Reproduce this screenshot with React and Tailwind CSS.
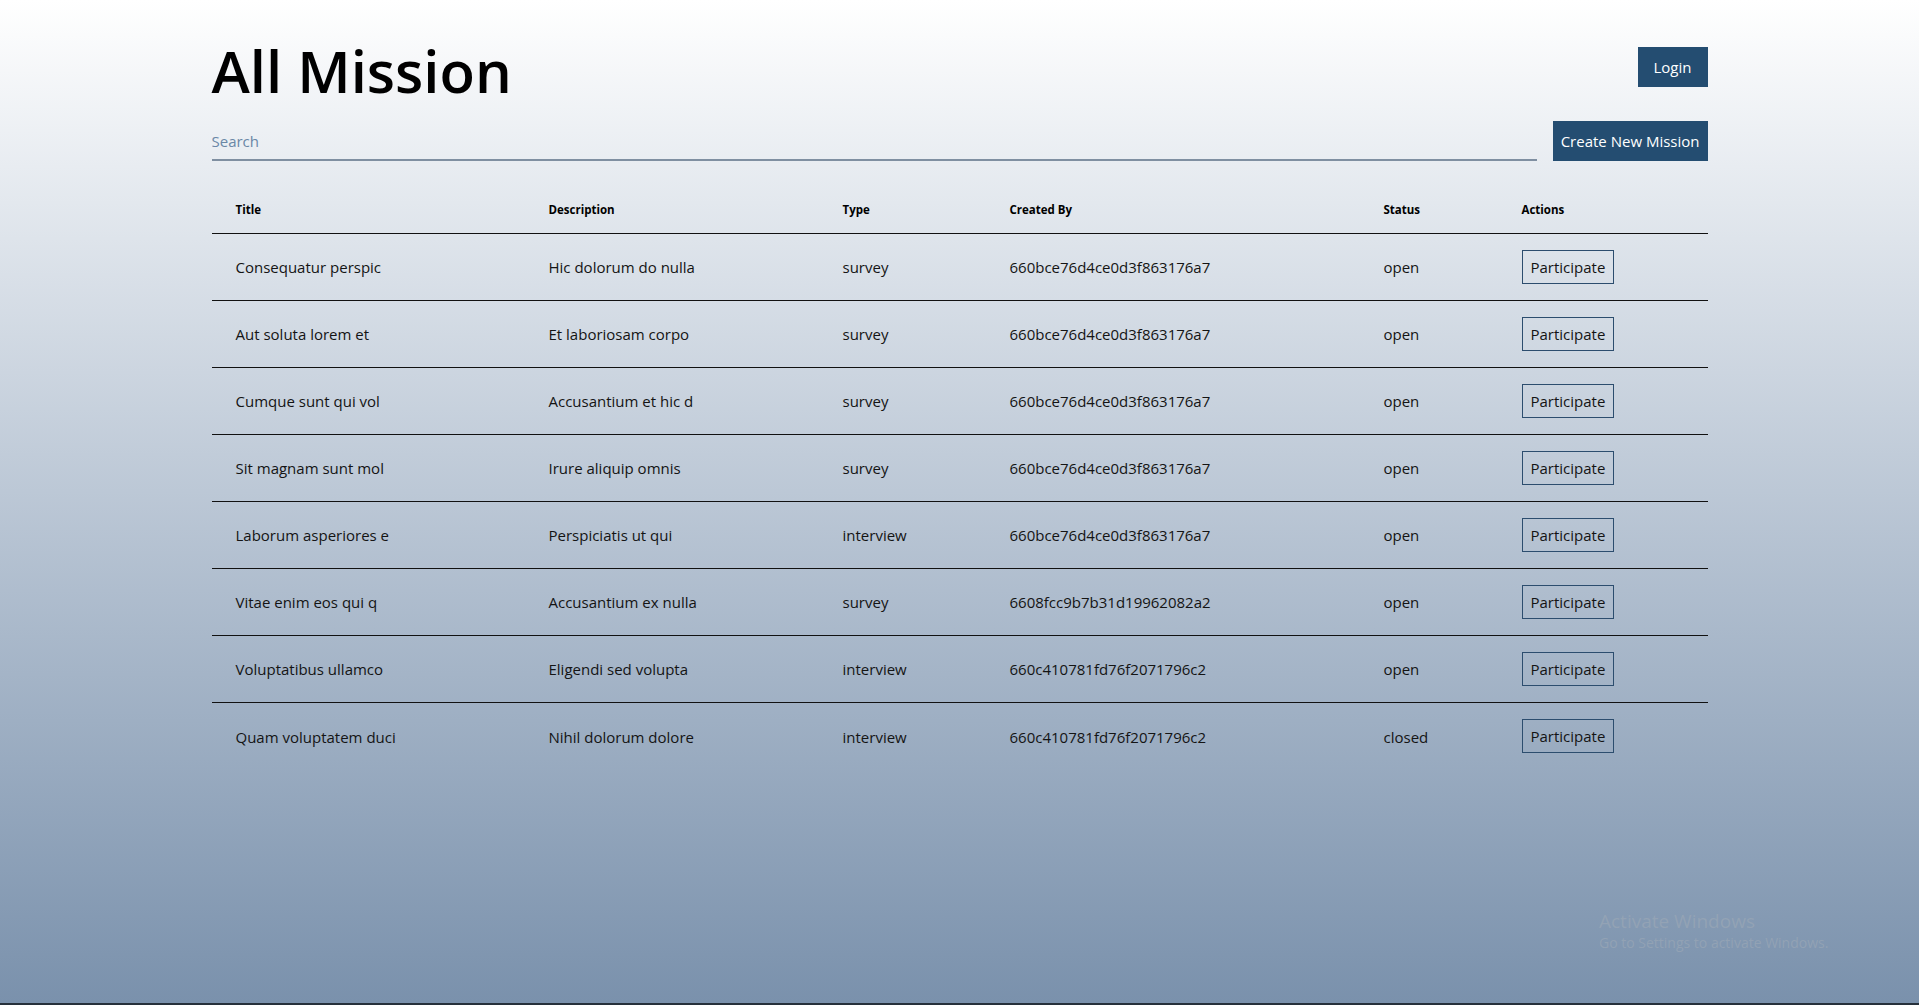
import React from 'react';

const missions = [
  { title: 'Consequatur perspic', description: 'Hic dolorum do nulla', type: 'survey', createdBy: '660bce76d4ce0d3f863176a7', status: 'open' },
  { title: 'Aut soluta lorem et', description: 'Et laboriosam corpo', type: 'survey', createdBy: '660bce76d4ce0d3f863176a7', status: 'open' },
  { title: 'Cumque sunt qui vol', description: 'Accusantium et hic d', type: 'survey', createdBy: '660bce76d4ce0d3f863176a7', status: 'open' },
  { title: 'Sit magnam sunt mol', description: 'Irure aliquip omnis', type: 'survey', createdBy: '660bce76d4ce0d3f863176a7', status: 'open' },
  { title: 'Laborum asperiores e', description: 'Perspiciatis ut qui', type: 'interview', createdBy: '660bce76d4ce0d3f863176a7', status: 'open' },
  { title: 'Vitae enim eos qui q', description: 'Accusantium ex nulla', type: 'survey', createdBy: '6608fcc9b7b31d19962082a2', status: 'open' },
  { title: 'Voluptatibus ullamco', description: 'Eligendi sed volupta', type: 'interview', createdBy: '660c410781fd76f2071796c2', status: 'open' },
  { title: 'Quam voluptatem duci', description: 'Nihil dolorum dolore', type: 'interview', createdBy: '660c410781fd76f2071796c2', status: 'closed' },
];

const headers = ['Title', 'Description', 'Type', 'Created By', 'Status', 'Actions'];

export default function App() {
  return (
    <div className="relative h-[1005px] overflow-hidden bg-gradient-to-b from-[#ffffff] to-[#7a91ac] border-b-2 border-[#26303b] font-['Open_Sans',sans-serif] text-[#141414]">
      <div className="mx-auto w-[1496px] pt-[41px]">
        {/* header */}
        <div className="flex items-start justify-between">
          <h1 className="text-[58px] leading-[59px] font-semibold text-black">All Mission</h1>
          <button className="mt-[6px] h-[40px] px-4 bg-[#244d71] text-white text-[15px]">Login</button>
        </div>

        {/* search + create */}
        <div className="mt-[21px] flex items-end gap-4">
          <input
            type="text"
            placeholder="Search"
            className="flex-1 h-[40px] pt-[2px] bg-transparent border-b-2 border-[#7f8fa1] text-[15px] outline-none placeholder:text-[#6a87a6]"
          />
          <button className="h-[40px] px-2 bg-[#244d71] text-white text-[15px]">Create New Mission</button>
        </div>

        {/* table */}
        <table className="mt-[26px] w-full table-fixed border-collapse">
          <colgroup>
            <col className="w-[313px]" />
            <col className="w-[294px]" />
            <col className="w-[167px]" />
            <col className="w-[374px]" />
            <col className="w-[138px]" />
            <col className="w-[210px]" />
          </colgroup>
          <thead>
            <tr className="h-[46px] border-b border-[#111]">
              {headers.map((h) => (
                <th key={h} className="pl-6 text-left align-middle text-[11.5px] font-bold text-black">{h}</th>
              ))}
            </tr>
          </thead>
          <tbody>
            {missions.map((m, i) => (
              <tr key={i} className={i < missions.length - 1 ? 'h-[67px] border-b border-[#111]' : 'h-[67px]'}>
                <td className="pl-6 pt-[2px] align-middle text-[15px]">{m.title}</td>
                <td className="pl-6 pt-[2px] align-middle text-[15px]">{m.description}</td>
                <td className="pl-6 pt-[2px] align-middle text-[15px]">{m.type}</td>
                <td className="pl-6 pt-[2px] align-middle text-[15px]">{m.createdBy}</td>
                <td className="pl-6 pt-[2px] align-middle text-[15px]">{m.status}</td>
                <td className="pl-6 align-middle">
                  <button className="h-[34px] px-2 pt-[1px] border border-[#2c4d6e] text-[15px] text-[#141414]">Participate</button>
                </td>
              </tr>
            ))}
          </tbody>
        </table>
      </div>

      {/* OS watermark */}
      <div className="absolute left-[1599px] top-[909px] text-[#98a6b6] opacity-75 pointer-events-none">
        <div className="text-[19px] leading-[24px]">Activate Windows</div>
        <div className="text-[14px] leading-[19px]">Go to Settings to activate Windows.</div>
      </div>
    </div>
  );
}
